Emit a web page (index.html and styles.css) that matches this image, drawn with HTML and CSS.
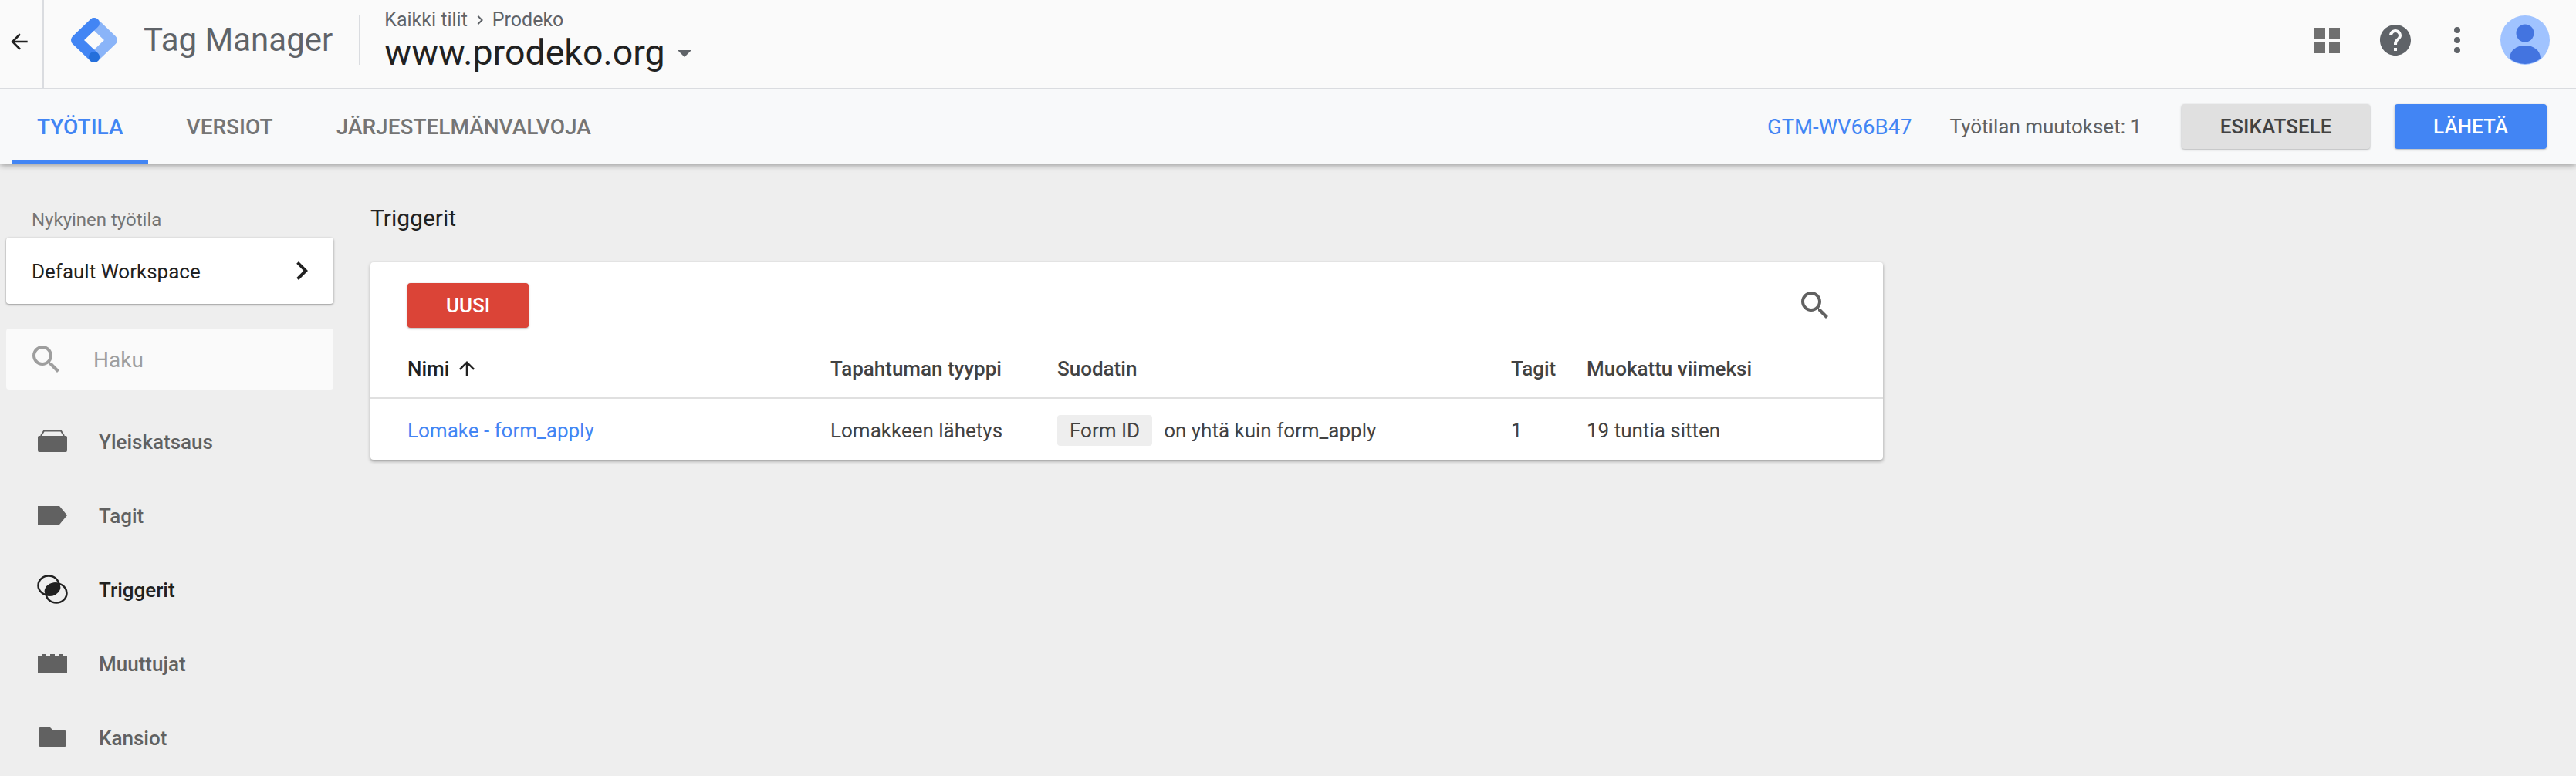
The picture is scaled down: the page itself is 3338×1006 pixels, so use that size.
FILE: index.html
```html
<!DOCTYPE html>
<html lang="fi">
<head>
    <meta charset="UTF-8">
    <title>Tag Manager</title>
    <link rel="stylesheet" href="styles.css">
</head>
<body>
    <header class="header">
        <div class="topbar">
            <button class="back-button">
                <svg width="32" height="32" viewBox="0 0 24 24"><path fill="#212121" d="M20 11H7.83l5.59-5.59L12 4l-8 8 8 8 1.41-1.41L7.83 13H20v-2z"/></svg>
            </button>
            <div class="topbar-content">
                <svg class="logo" width="60" height="58" viewBox="0 0 60 58">
                    <path d="M30 7 53 29 30 51" fill="none" stroke="#8ab4f8" stroke-width="14" stroke-linecap="round" stroke-linejoin="round"/>
                    <path d="M30 7 7 29 30 51" fill="none" stroke="#4285f4" stroke-width="14" stroke-linecap="round" stroke-linejoin="round"/>
                    <circle cx="30" cy="51" r="7" fill="#246fdb"/>
                </svg>
                <div class="product-name">Tag Manager</div>
                <div class="container-info">
                    <div class="breadcrumb">
                        <span>Kaikki tilit</span>
                        <svg width="24" height="24" viewBox="0 0 24 24"><path fill="#5f6368" d="M10 6 8.6 7.4 13.2 12l-4.6 4.6L10 18l6-6z"/></svg>
                        <span>Prodeko</span>
                    </div>
                    <div class="container-name">
                        <span>www.prodeko.org</span>
                        <span class="caret"></span>
                    </div>
                </div>
                <div class="top-actions">
                    <div class="apps-icon"><i></i><i></i><i></i><i></i></div>
                    <svg class="help-icon" width="48" height="48" viewBox="0 0 24 24"><path fill="#5f6368" d="M12 2C6.48 2 2 6.48 2 12s4.48 10 10 10 10-4.48 10-10S17.52 2 12 2zm1 17h-2v-2h2v2zm2.07-7.75l-.9.92C13.45 12.9 13 13.5 13 15h-2v-.5c0-1.1.45-2.1 1.17-2.83l1.24-1.26c.37-.36.59-.86.59-1.41 0-1.1-.9-2-2-2s-2 .9-2 2H8c0-2.21 1.79-4 4-4s4 1.79 4 4c0 .88-.36 1.68-.93 2.25z"/></svg>
                    <div class="more-icon"><i></i><i></i><i></i></div>
                    <svg class="avatar" width="64" height="64" viewBox="0 0 64 64">
                        <circle cx="32" cy="32" r="32" fill="#a0c3ff"/>
                        <circle cx="32" cy="23" r="11.5" fill="#4374e0"/>
                        <path d="M12 56c0-11 9-17 20-17s20 6 20 17a32 32 0 0 1-40 0z" fill="#4374e0"/>
                    </svg>
                </div>
            </div>
        </div>
        <div class="subbar">
            <nav class="tabs">
                <a class="tab tab-active">TYÖTILA</a>
                <a class="tab">VERSIOT</a>
                <a class="tab">JÄRJESTELMÄNVALVOJA</a>
            </nav>
            <div class="sub-actions">
                <a class="container-id">GTM-WV66B47</a>
                <span class="changes">Työtilan muutokset: 1</span>
                <button class="btn btn-preview">ESIKATSELE</button>
                <button class="btn btn-submit">LÄHETÄ</button>
            </div>
        </div>
    </header>

    <div class="page">
        <aside class="sidebar">
            <div class="workspace-label">Nykyinen työtila</div>
            <div class="workspace-card">
                <span>Default Workspace</span>
                <svg width="48" height="48" viewBox="0 0 24 24"><path fill="#212121" d="M10 6 8.59 7.41 13.17 12l-4.58 4.59L10 18l6-6z"/></svg>
            </div>
            <div class="side-search">
                <svg width="48" height="48" viewBox="0 0 24 24"><path fill="#9e9e9e" d="M15.5 14h-.79l-.28-.27C15.41 12.59 16 11.11 16 9.5 16 5.91 13.09 3 9.5 3S3 5.91 3 9.5 5.91 16 9.5 16c1.61 0 3.09-.59 4.23-1.57l.27.28v.79l5 4.99L20.49 19l-4.99-5zm-6 0C7.01 14 5 11.99 5 9.5S7.01 5 9.5 5 14 7.01 14 9.5 11.99 14 9.5 14z"/></svg>
                <span>Haku</span>
            </div>
            <nav class="side-nav">
                <a class="nav-item">
                    <svg width="40" height="40" viewBox="0 0 40 40">
                        <path d="M5 13 9 6.500H31L35 13" fill="none" stroke="#616161" stroke-width="2"/>
                        <path d="M1 15q0-2 2-2H37q2 0 2 2V32q0 2-2 2H3q-2 0-2-2z" fill="#616161"/>
                    </svg>
                    <span>Yleiskatsaus</span>
                </a>
                <a class="nav-item">
                    <svg width="40" height="40" viewBox="0 0 40 40"><path d="M1 8H29L39 20 29 32H1z" fill="#616161"/></svg>
                    <span>Tagit</span>
                </a>
                <a class="nav-item nav-item-active">
                    <svg width="40" height="40" viewBox="0 0 40 40">
                        <ellipse cx="15" cy="15" rx="13.500" ry="12.500" fill="none" stroke="#212121" stroke-width="2.500"/>
                        <ellipse cx="25" cy="25" rx="13.500" ry="12.500" fill="none" stroke="#212121" stroke-width="2.500"/>
                        <ellipse cx="20" cy="20" rx="11" ry="8" fill="#212121" transform="rotate(-30 20 20)"/>
                    </svg>
                    <span>Triggerit</span>
                </a>
                <a class="nav-item">
                    <svg width="40" height="40" viewBox="0 0 40 40"><path d="M1 11H6V8H11V11H17V8H23V11H29V8H34V11H39V32H1z" fill="#616161"/></svg>
                    <span>Muuttujat</span>
                </a>
                <a class="nav-item">
                    <svg width="40" height="40" viewBox="0 0 40 40"><path d="M3 8q0-2 2-2H16L20 10H35q2 0 2 2V31q0 2-2 2H5q-2 0-2-2z" fill="#616161"/></svg>
                    <span>Kansiot</span>
                </a>
            </nav>
        </aside>

        <main class="main">
            <h1 class="page-title">Triggerit</h1>
            <section class="card">
                <div class="card-toolbar">
                    <button class="btn btn-new">UUSI</button>
                    <svg width="48" height="48" viewBox="0 0 24 24"><path fill="#616161" d="M15.5 14h-.79l-.28-.27C15.41 12.59 16 11.11 16 9.5 16 5.91 13.09 3 9.5 3S3 5.91 3 9.5 5.91 16 9.5 16c1.61 0 3.09-.59 4.23-1.57l.27.28v.79l5 4.99L20.49 19l-4.99-5zm-6 0C7.01 14 5 11.99 5 9.5S7.01 5 9.5 5 14 7.01 14 9.5 11.99 14 9.5 14z"/></svg>
                </div>
                <div class="table-row table-head">
                    <div class="sort-col">Nimi
                        <svg width="30" height="30" viewBox="0 0 24 24"><path fill="#212121" d="M4 12l1.41 1.41L11 7.83V20h2V7.83l5.58 5.59L20 12l-8-8-8 8z"/></svg>
                    </div>
                    <div>Tapahtuman tyyppi</div>
                    <div>Suodatin</div>
                    <div>Tagit</div>
                    <div>Muokattu viimeksi</div>
                </div>
                <div class="table-row table-body">
                    <div><a class="trigger-link">Lomake - form_apply</a></div>
                    <div>Lomakkeen lähetys</div>
                    <div class="filter"><span class="chip">Form ID</span>on yhtä kuin form_apply</div>
                    <div>1</div>
                    <div>19 tuntia sitten</div>
                </div>
            </section>
        </main>
    </div>
</body>
</html>
```

FILE: styles.css
```css
* {
    box-sizing: border-box;
}
body {
    margin: 0;
    min-height: 1006px;
    background-color: #eeeeee;
    font-family: Roboto, "Liberation Sans", sans-serif;
    font-size: 26px;
    color: #212121;
    overflow: hidden;
}
button {
    font-family: inherit;
    border: none;
    padding: 0;
}

/* header */
.header {
    background-color: #f8f9fa;
    box-shadow: 0 2px 8px rgba(0, 0, 0, 0.4);
}
.topbar {
    display: flex;
    height: 116px;
    background-color: #fafafa;
    border-bottom: 2px solid #dadce0;
}
.back-button {
    display: flex;
    align-items: center;
    justify-content: center;
    width: 57px;
    background: none;
    border-right: 2px solid #dadce0;
    padding: 0 6px 6px 0;
}
.topbar-content {
    flex: 1;
    display: flex;
    align-items: center;
    padding-bottom: 10px;
}
.logo {
    margin-left: 35px;
}
.product-name {
    margin-left: 34px;
    padding-right: 34px;
    font-size: 42px;
    color: #5f6368;
    line-height: 64px;
    border-right: 2px solid #dadce0;
}
.container-info {
    margin-left: 31px;
}
.breadcrumb {
    display: flex;
    align-items: center;
    gap: 4px;
    padding-top: 2px;
    font-size: 25px;
    line-height: 28px;
    color: #5f6368;
}
.container-name {
    display: flex;
    align-items: center;
    margin-top: 2px;
    font-size: 46.5px;
    line-height: 52px;
    color: #212121;
}
.caret {
    margin-left: 16px;
    margin-top: 2px;
    border-left: 9px solid transparent;
    border-right: 9px solid transparent;
    border-top: 9px solid #5f6368;
}
.top-actions {
    display: flex;
    align-items: center;
    margin-left: auto;
    padding-right: 34px;
}
.apps-icon {
    display: grid;
    grid-template-columns: 14px 14px;
    gap: 5px;
}
.apps-icon i {
    height: 14px;
    background-color: #6f6f6f;
}
.help-icon {
    margin-left: 48px;
}
.more-icon {
    display: flex;
    flex-direction: column;
    gap: 5px;
    margin-left: 52px;
}
.more-icon i {
    width: 8px;
    height: 8px;
    border-radius: 50%;
    background-color: #5f6368;
}
.avatar {
    margin-left: 52px;
}
.subbar {
    display: flex;
    justify-content: space-between;
    align-items: center;
    height: 96px;
}
.tabs {
    display: flex;
    gap: 18px;
    margin-left: 16px;
    height: 100%;
}
.tab {
    display: flex;
    align-items: center;
    padding: 4px 32px 0;
    font-size: 28px;
    font-weight: 500;
    color: #757575;
    border-bottom: 4px solid transparent;
}
.tab-active {
    color: #4285f4;
    border-bottom-color: #4285f4;
}
.sub-actions {
    display: flex;
    align-items: center;
    padding-right: 38px;
}
.container-id {
    font-size: 27.5px;
    color: #4285f4;
}
.changes {
    margin-left: 49px;
    color: #616161;
}
.btn {
    height: 58px;
    border-radius: 4px;
    font-size: 26px;
    font-weight: 500;
    box-shadow: 0 1px 3px rgba(0, 0, 0, 0.3);
}
.btn-preview {
    width: 244px;
    margin-left: 52px;
    background-color: #e0e0e0;
    color: #424242;
}
.btn-submit {
    width: 197px;
    margin-left: 32px;
    background-color: #4285f4;
    color: #ffffff;
}

/* page */
.page {
    display: flex;
    gap: 48px;
    padding-left: 8px;
}
.sidebar {
    width: 424px;
}
.workspace-label {
    padding: 60px 0 0 33px;
    margin-bottom: 10px;
    font-size: 24px;
    line-height: 26px;
    color: #757575;
}
.workspace-card {
    display: flex;
    justify-content: space-between;
    align-items: center;
    height: 86px;
    padding: 0 17px 0 33px;
    background-color: #ffffff;
    border-radius: 4px;
    box-shadow: 0 1px 3px rgba(0, 0, 0, 0.4);
}
.workspace-card span {
    padding-top: 2px;
}
.side-search {
    display: flex;
    align-items: center;
    height: 79px;
    margin-top: 32px;
    padding-left: 28px;
    background-color: #fafafa;
    border-radius: 4px;
    font-size: 28px;
    color: #9e9e9e;
}
.side-search span {
    margin-left: 37px;
    padding-top: 2px;
}
.side-nav {
    margin-top: 19px;
}
.nav-item {
    display: flex;
    align-items: center;
    height: 96px;
    padding-left: 40px;
    font-weight: 500;
    color: #616161;
}
.nav-item span {
    margin-left: 40px;
    padding-top: 2px;
}
.nav-item-active {
    color: #212121;
}

/* triggers table */
.main {
    width: 1960px;
}
.page-title {
    margin: 0;
    padding-top: 54px;
    font-size: 30px;
    line-height: 34px;
    font-weight: 400;
    color: #212121;
}
.card {
    margin-top: 40px;
    background-color: #ffffff;
    border-radius: 4px;
    box-shadow: 0 2px 4px rgba(0, 0, 0, 0.35);
}
.card-toolbar {
    display: flex;
    justify-content: space-between;
    align-items: center;
    height: 100px;
    padding: 12px 64px 0 48px;
}
.btn-new {
    width: 157px;
    background-color: #db4437;
    color: #ffffff;
}
.table-row {
    display: grid;
    grid-template-columns: 548px 294px 588px 98px 1fr;
    align-items: center;
    padding-left: 48px;
}
.table-head {
    height: 77px;
    font-weight: 500;
    color: #424242;
    border-bottom: 2px solid #e0e0e0;
}
.sort-col {
    display: flex;
    align-items: center;
    gap: 8px;
    color: #212121;
}
.table-body {
    height: 79px;
    padding-top: 2px;
    color: #424242;
}
.trigger-link {
    color: #4285f4;
}
.filter {
    display: flex;
    align-items: center;
}
.chip {
    display: flex;
    align-items: center;
    height: 40px;
    padding: 0 16px;
    margin-right: 15px;
    background-color: #eeeeee;
    border-radius: 4px;
}
```
